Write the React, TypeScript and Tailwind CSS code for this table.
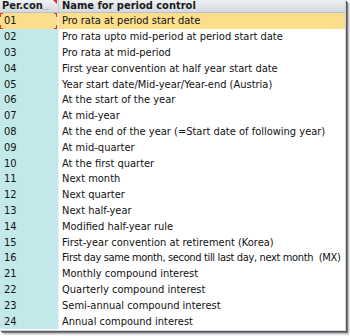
import React from "react";

const rows: [string, string][] = [
  ["01", "Pro rata at period start date"],
  ["02", "Pro rata upto mid-period at period start date"],
  ["03", "Pro rata at mid-period"],
  ["04", "First year convention at half year start date"],
  ["05", "Year start date/Mid-year/Year-end (Austria)"],
  ["06", "At the start of the year"],
  ["07", "At mid-year"],
  ["08", "At the end of the year (=Start date of following year)"],
  ["09", "At mid-quarter"],
  ["10", "At the first quarter"],
  ["11", "Next month"],
  ["12", "Next quarter"],
  ["13", "Next half-year"],
  ["14", "Modified half-year rule"],
  ["15", "First-year convention at retirement (Korea)"],
  ["16", "First day same month, second till last day, next month\u00a0\u00a0(MX)"],
  ["21", "Monthly compound interest"],
  ["22", "Quarterly compound interest"],
  ["23", "Semi-annual compound interest"],
  ["24", "Annual compound interest"],
];

export default function App() {
  return (
    <div
      className="w-[350px] h-[336px] bg-white overflow-hidden text-[11px] text-[#111]"
      style={{ fontFamily: '"DejaVu Sans Condensed", "DejaVu Sans", sans-serif', fontStretch: "condensed" }}
    >
      <div className="w-[346px] h-[331px] flex flex-col bg-white border-r border-b border-[#c8d4e2] shadow-[1px_1px_0_#5a5a5a,2px_2px_0_#7a7a7a,3px_3px_2px_rgba(0,0,0,0.35)] overflow-hidden">
        <div className="flex h-[13px] bg-gradient-to-b from-[#eef1f4] to-[#d4d9df] border-b border-[#b9c2cc] font-bold text-[#1a1a1a] leading-[12px]">
          <div className="relative shrink-0 w-[59px] pl-[2px] border-r border-[#c3cad2] flex items-end">
            <span>Per.con</span>
            <span className="text-[7px] leading-[8px] text-[#666] font-normal">...</span>
            <span className="absolute right-[1px] top-0 w-0 h-0 border-l-[4px] border-l-transparent border-t-[4px] border-t-[#d8282c]" />
          </div>
          <div className="pl-[3px] flex-1 whitespace-nowrap overflow-hidden">Name for period control</div>
        </div>
        <div className="flex flex-col">
          {rows.map(([k, n], i) => (
            <div
              key={k}
              className={`flex h-[15.8px] items-center leading-[15px] ${i === 0 ? "bg-[#fcdd8c]" : ""}`}
            >
              <div
                className={`relative shrink-0 w-[59px] h-full flex items-center pl-[4px] border-r border-[#e6f3f4] ${
                  i === 0 ? "bg-[#fcdd8c]" : "bg-[#c3e8ea]"
                }`}
              >
                {k}
                {i === 0 && (
                  <>
                    <span className="absolute left-0 top-0 w-[3px] h-[4px] border-l border-t border-[#e23b30]" />
                    <span className="absolute left-0 bottom-0 w-[3px] h-[4px] border-l border-b border-[#e23b30]" />
                    <span className="absolute right-[1px] top-0 w-[3px] h-[4px] border-r border-t border-[#e23b30]" />
                    <span className="absolute right-[1px] bottom-0 w-[3px] h-[4px] border-r border-b border-[#e23b30]" />
                  </>
                )}
              </div>
              <div
                className={`pl-[3px] whitespace-nowrap min-w-0 ${k === "16" ? "tracking-[-0.35px]" : ""}`}
              >
                {n}
              </div>
            </div>
          ))}
        </div>
      </div>
    </div>
  );
}
